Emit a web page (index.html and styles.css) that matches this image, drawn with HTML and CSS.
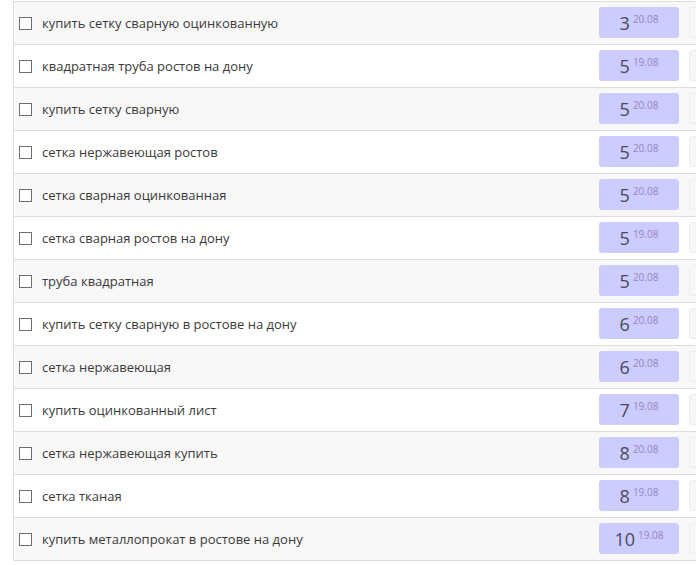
FILE: index.html
```html
<!DOCTYPE html>
<html lang="ru">
<head>
<meta charset="utf-8">
<link rel="stylesheet" href="styles.css">
</head>
<body>
<div class="table">
  <div class="row"><span class="check"></span><span class="kw">купить сетку сварную оцинкованную</span><span class="pos">3<sup>20.08</sup></span><span class="next"></span></div>
  <div class="row"><span class="check"></span><span class="kw">квадратная труба ростов на дону</span><span class="pos">5<sup>19.08</sup></span><span class="next"></span></div>
  <div class="row"><span class="check"></span><span class="kw">купить сетку сварную</span><span class="pos">5<sup>20.08</sup></span><span class="next"></span></div>
  <div class="row"><span class="check"></span><span class="kw">сетка нержавеющая ростов</span><span class="pos">5<sup>20.08</sup></span><span class="next"></span></div>
  <div class="row"><span class="check"></span><span class="kw">сетка сварная оцинкованная</span><span class="pos">5<sup>20.08</sup></span><span class="next"></span></div>
  <div class="row"><span class="check"></span><span class="kw">сетка сварная ростов на дону</span><span class="pos">5<sup>19.08</sup></span><span class="next"></span></div>
  <div class="row"><span class="check"></span><span class="kw">труба квадратная</span><span class="pos">5<sup>20.08</sup></span><span class="next"></span></div>
  <div class="row"><span class="check"></span><span class="kw">купить сетку сварную в ростове на дону</span><span class="pos">6<sup>20.08</sup></span><span class="next"></span></div>
  <div class="row"><span class="check"></span><span class="kw">сетка нержавеющая</span><span class="pos">6<sup>20.08</sup></span><span class="next"></span></div>
  <div class="row"><span class="check"></span><span class="kw">купить оцинкованный лист</span><span class="pos">7<sup>19.08</sup></span><span class="next"></span></div>
  <div class="row"><span class="check"></span><span class="kw">сетка нержавеющая купить</span><span class="pos">8<sup>20.08</sup></span><span class="next"></span></div>
  <div class="row"><span class="check"></span><span class="kw">сетка тканая</span><span class="pos">8<sup>19.08</sup></span><span class="next"></span></div>
  <div class="row"><span class="check"></span><span class="kw">купить металлопрокат в ростове на дону</span><span class="pos">10<sup>19.08</sup></span><span class="next"></span></div>
</div>
</body>
</html>
```

FILE: styles.css
```css
html, body {
  margin: 0;
  padding: 0;
  background: #ffffff;
  overflow: hidden;
}
body {
  padding-top: 1px;
  padding-left: 13px;
  font-family: "Open Sans", "Liberation Sans", sans-serif;
}
.table {
  border-left: 1px solid #dddddd;
  border-top: 1px solid #dddddd;
  overflow: hidden;
}
.row {
  display: flex;
  align-items: center;
  height: 42px;
  border-bottom: 1px solid #dddddd;
  padding-left: 5px;
  background: #ffffff;
}
.row:nth-child(odd) {
  background: #f8f8f8;
}
.check {
  width: 11px;
  height: 11px;
  border: 1px solid #6f6f6f;
  background: #ffffff;
  flex: none;
  margin-right: 10px;
}
.kw {
  font-size: 13px;
  color: #3a3a3a;
  width: 557px;
  flex: none;
  white-space: nowrap;
}
.pos {
  flex: none;
  width: 80px;
  height: 31px;
  margin-top: -1px;
  border-radius: 3px;
  background: #ccccff;
  display: flex;
  justify-content: center;
  align-items: center;
  font-size: 18px;
  color: #4a4a5a;
  line-height: 1;
  padding-top: 1px;
  box-sizing: border-box;
}
.pos sup {
  font-size: 10px;
  color: #9784bb;
  vertical-align: 0;
  position: relative;
  top: -4px;
  margin-left: 3px;
}
.next {
  flex: none;
  margin-left: 10px;
  width: 60px;
  height: 31px;
  margin-top: -1px;
  border: 1px solid #ececec;
  border-radius: 3px;
  background: #f7f7f7;
  box-sizing: border-box;
}
```
